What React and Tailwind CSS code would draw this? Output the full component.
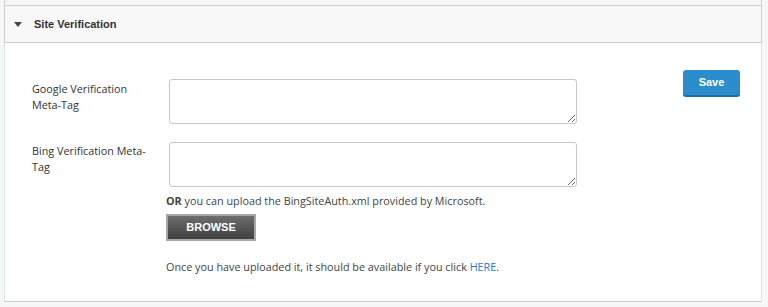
import React from "react";

export default function App() {
  return (
    <div className="w-[768px] h-[307px] bg-[#f7f7f7] overflow-hidden">
      <div className="ml-[4px] w-[758px] border-x border-[#cfcfcf]">
        <div className="h-[5px] bg-[#f7f7f7]" />
        <div className="h-[38px] border-y border-[#cccccc] bg-[#f8f8f8] flex items-center pl-[9px]">
          <svg width="8" height="5" viewBox="0 0 8 5" className="mr-[12px]">
            <polygon points="0,0 8,0 4,5" fill="#444" />
          </svg>
          <span className="font-['Liberation_Sans',Arial,sans-serif] font-bold text-[11px] text-[#333]">
            Site Verification
          </span>
        </div>
      </div>
      <div className="ml-[4px] w-[758px] border-x border-b border-x-[#d7e3f0] border-b-[#cccccc] bg-white h-[259px] flex font-['Open_Sans',sans-serif] text-[10.8px] text-[#333]">
        <div className="flex flex-col pl-[27px] pt-[36px]">
          <div className="flex">
            <div className="w-[137px] pt-[2px] leading-[16px]">
              Google Verification<br />Meta-Tag
            </div>
            <textarea className="w-[408px] h-[45px] border border-[#c8c8c8] rounded-[3px] bg-white resize-y outline-none" />
          </div>
          <div className="flex mt-[18px]">
            <div className="w-[137px] pt-[1px] leading-[16px]">
              Bing Verification Meta-<br />Tag
            </div>
            <div className="flex flex-col">
              <textarea className="w-[408px] h-[45px] border border-[#c8c8c8] rounded-[3px] bg-white resize-y outline-none" />
              <div className="ml-[-3px] mt-[6px] leading-[16px] text-[#444]">
                <span className="font-bold">OR</span> you can upload the BingSiteAuth.xml provided by Microsoft.
              </div>
              <button className="ml-[-3px] mt-[5px] w-[90px] h-[27px] border-[2px] border-[#a8a8a8] bg-gradient-to-b from-[#6e6e6e] to-[#404040] text-white font-['Liberation_Sans',Arial,sans-serif] font-bold text-[11px] flex items-center justify-center">
                BROWSE
              </button>
              <div className="ml-[-3px] mt-[18px] leading-[16px] text-[#444]">
                Once you have uploaded it, it should be available if you click <span className="text-[#2a7ab8]">HERE</span>.
              </div>
            </div>
          </div>
        </div>
        <div className="ml-auto mr-[21px] pt-[27px]">
          <button className="w-[57px] h-[27px] rounded-[3px] bg-[#2b8dcc] border-b-[2px] border-[#1f6fa6] text-white font-['Liberation_Sans',Arial,sans-serif] font-bold text-[11px] flex items-center justify-center">
            Save
          </button>
        </div>
      </div>
    </div>
  );
}
